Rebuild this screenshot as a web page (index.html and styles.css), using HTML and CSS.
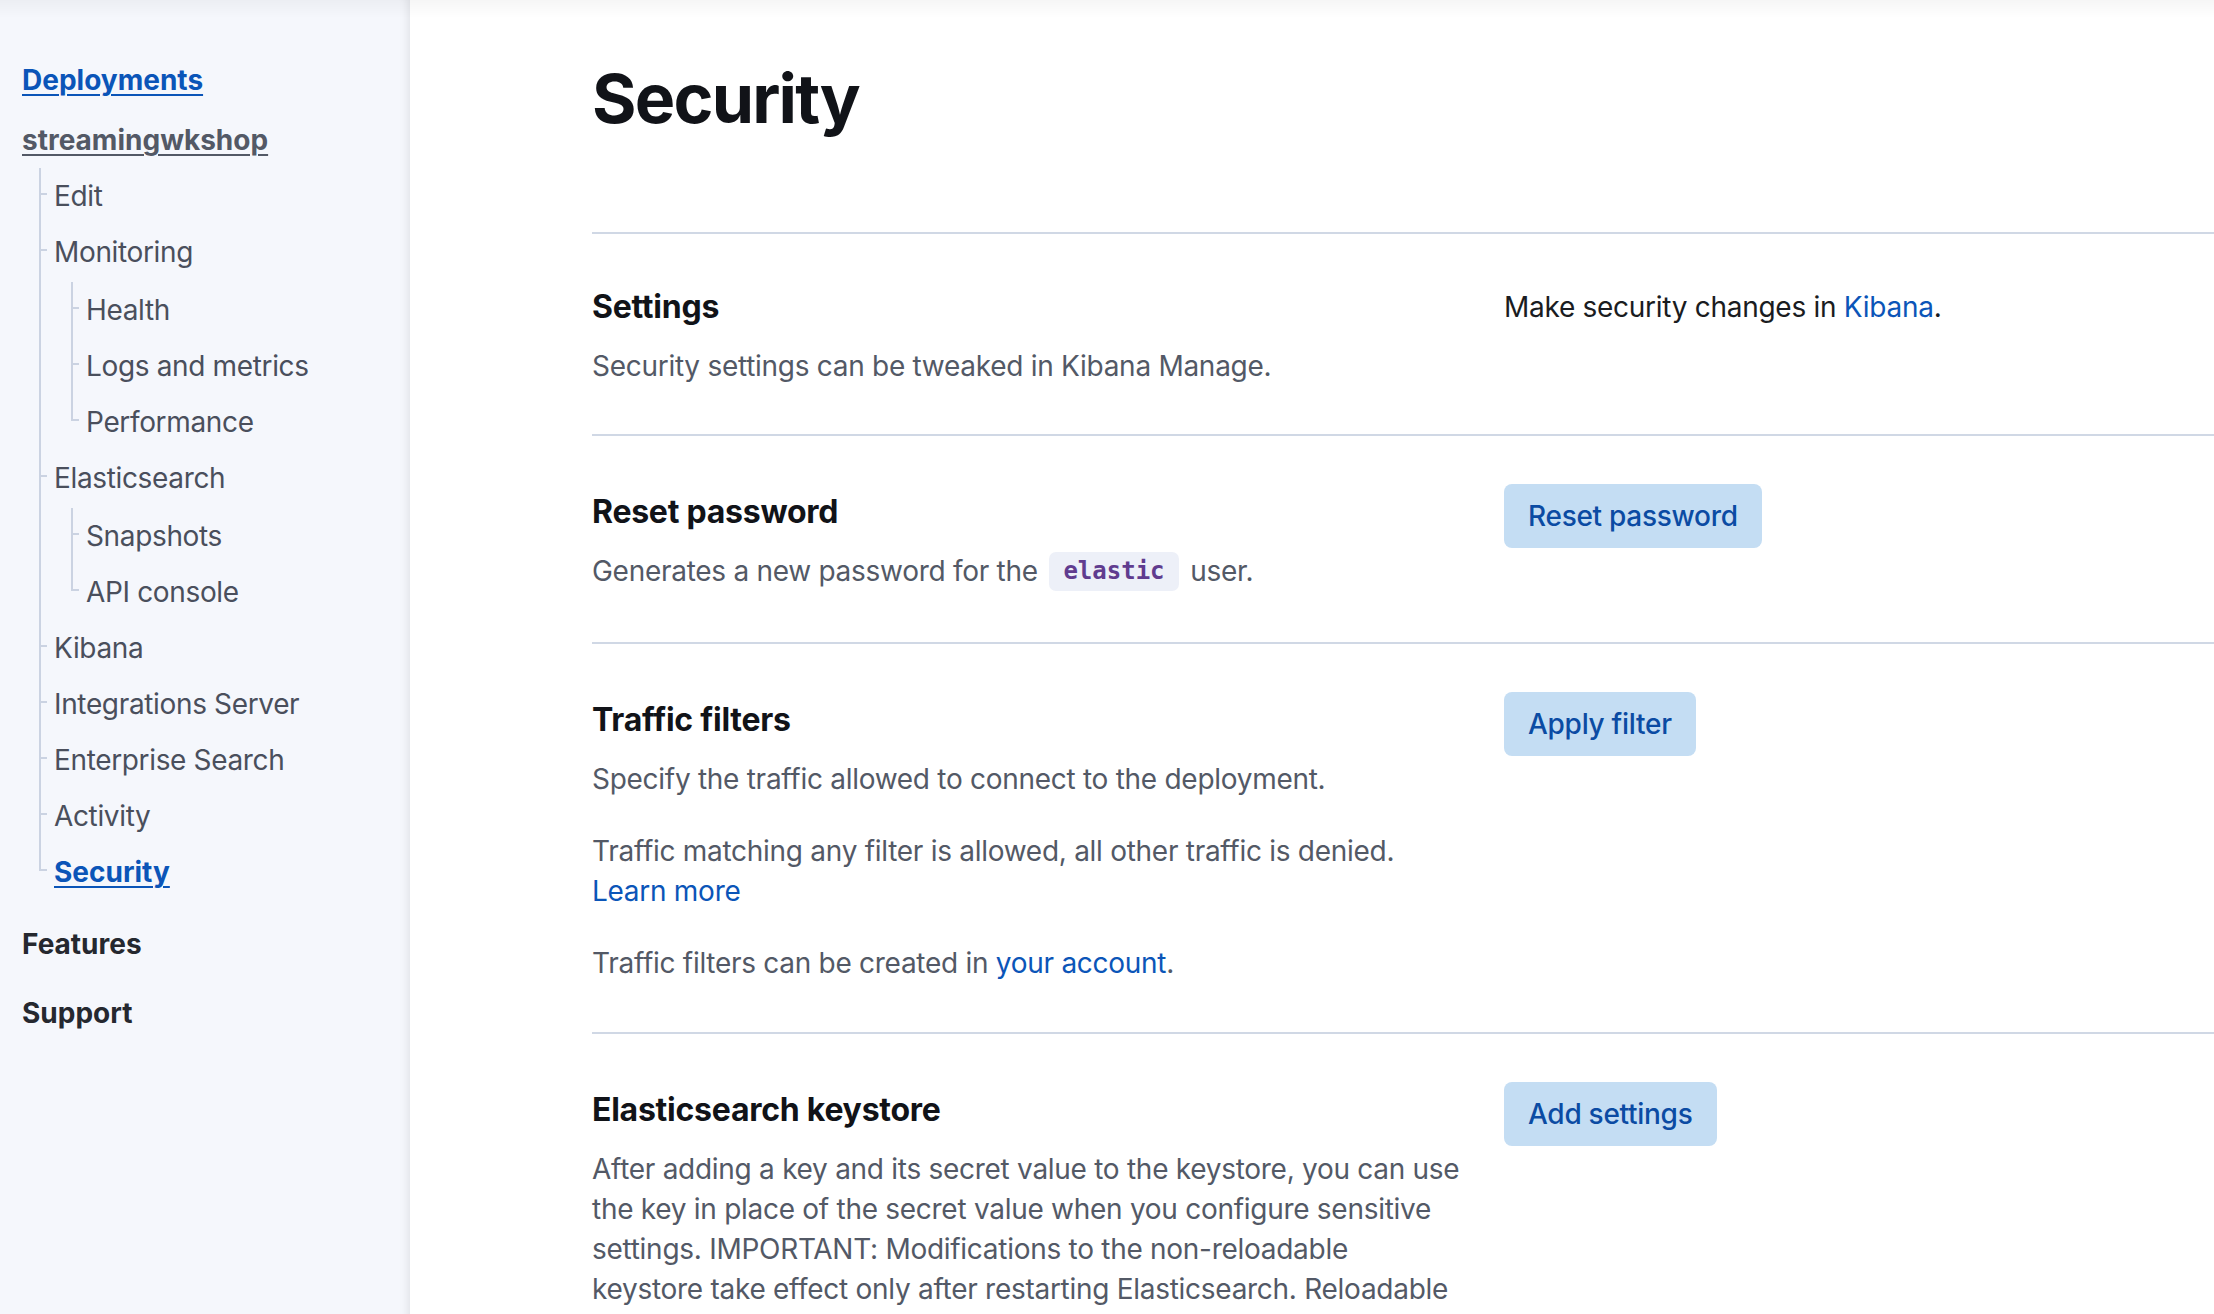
FILE: index.html
```html
<!DOCTYPE html>
<html lang="en">
<head>
<meta charset="utf-8">
<title>Security</title>
<link rel="stylesheet" href="styles.css">
</head>
<body>
<div class="top-shadow"></div>
<aside class="sidebar">
  <a class="nav-root" href="#">Deployments</a>
  <a class="nav-deployment" href="#">streamingwkshop</a>
  <ul class="tree">
    <li><span class="item">Edit</span></li>
    <li><span class="item">Monitoring</span>
      <ul class="tree">
        <li><span class="item">Health</span></li>
        <li><span class="item">Logs and metrics</span></li>
        <li><span class="item">Performance</span></li>
      </ul>
    </li>
    <li><span class="item">Elasticsearch</span>
      <ul class="tree">
        <li><span class="item">Snapshots</span></li>
        <li><span class="item">API console</span></li>
      </ul>
    </li>
    <li><span class="item">Kibana</span></li>
    <li><span class="item">Integrations Server</span></li>
    <li><span class="item">Enterprise Search</span></li>
    <li><span class="item">Activity</span></li>
    <li><a class="item active" href="#">Security</a></li>
  </ul>
  <div class="nav-group features">Features</div>
  <div class="nav-group support">Support</div>
</aside>
<main class="main">
  <h1 class="page-title">Security</h1>

  <section class="row row-first">
    <div class="row-desc">
      <h2 class="row-title">Settings</h2>
      <p class="row-text">Security settings can be tweaked in Kibana Manage.</p>
    </div>
    <div class="row-field">
      <p class="field-text">Make security changes in <a class="link" href="#">Kibana</a>.</p>
    </div>
  </section>

  <section class="row">
    <div class="row-desc">
      <h2 class="row-title">Reset password</h2>
      <p class="row-text">Generates a new password for the <code class="code">elastic</code> user.</p>
    </div>
    <div class="row-field">
      <button class="btn">Reset password</button>
    </div>
  </section>

  <section class="row">
    <div class="row-desc">
      <h2 class="row-title">Traffic filters</h2>
      <p class="row-text">Specify the traffic allowed to connect to the deployment.</p>
      <p class="row-text spaced">Traffic matching any filter is allowed, all other traffic is denied.<br><a class="link" href="#">Learn more</a></p>
      <p class="row-text spaced">Traffic filters can be created in <a class="link" href="#">your account</a>.</p>
    </div>
    <div class="row-field">
      <button class="btn">Apply filter</button>
    </div>
  </section>

  <section class="row">
    <div class="row-desc">
      <h2 class="row-title">Elasticsearch keystore</h2>
      <p class="row-text">After adding a key and its secret value to the keystore, you can use the key in place of the secret value when you configure sensitive settings. IMPORTANT: Modifications to the non-reloadable keystore take effect only after restarting Elasticsearch. Reloadable keystore changes take effect after issuing a reload API request. <a class="link" href="#">Learn more</a></p>
    </div>
    <div class="row-field">
      <button class="btn">Add settings</button>
    </div>
  </section>
</main>
</body>
</html>
```

FILE: styles.css
```css
* { box-sizing: border-box; }

html, body {
  margin: 0;
  padding: 0;
}

body {
  display: flex;
  min-height: 100vh;
  font-family: Inter, "Noto Sans", "Liberation Sans", sans-serif;
  background: #ffffff;
  color: #1a1c21;
  overflow: hidden;
}

.top-shadow {
  position: fixed;
  top: 0;
  left: 0;
  right: 0;
  height: 18px;
  background: linear-gradient(to bottom, rgba(0, 0, 0, 0.035), rgba(0, 0, 0, 0));
  pointer-events: none;
  z-index: 5;
}

/* ---------- Sidebar ---------- */
.sidebar {
  flex: 0 0 410px;
  width: 410px;
  background: #f5f7fc;
  box-shadow: inset -10px 0 10px -8px rgba(0, 0, 0, 0.09);
  padding: 52px 0 0 22px;
  display: flex;
  flex-direction: column;
  align-items: flex-start;
  font-size: 28px;
  line-height: 56px;
  letter-spacing: -0.35px;
}

.nav-root {
  color: #0b55b8;
  font-weight: 700;
  letter-spacing: 0;
  text-decoration: underline;
  text-decoration-thickness: 2px;
  text-underline-offset: 4px;
  margin-bottom: 4px;
}

.nav-deployment {
  color: #535966;
  font-weight: 700;
  letter-spacing: 0;
  text-decoration: underline;
  text-decoration-thickness: 2px;
  text-underline-offset: 4px;
}

.tree {
  list-style: none;
  margin: 0;
  padding: 0 0 0 32px;
}

.tree li {
  position: relative;
}

.tree li::before {
  content: "";
  position: absolute;
  left: -15px;
  top: 25px;
  width: 8px;
  height: 2px;
  background: #cbd3e2;
}

.tree li::after {
  content: "";
  position: absolute;
  left: -15px;
  top: 0;
  bottom: 0;
  width: 2px;
  background: #cbd3e2;
}

.tree li:last-child::after {
  bottom: auto;
  height: 27px;
}

.tree .tree {
  margin-top: 2px;
}

.item {
  display: block;
  color: #4a4f5c;
  text-decoration: none;
  white-space: nowrap;
}

.item.active {
  display: inline-block;
  color: #0b55b8;
  font-weight: 700;
  letter-spacing: 0;
  text-decoration: underline;
  text-decoration-thickness: 2px;
  text-underline-offset: 4px;
}

.nav-group {
  font-weight: 700;
  letter-spacing: 0;
  color: #25282f;
}

.features { margin-top: 16px; }
.support { margin-top: 13px; }

/* ---------- Main ---------- */
.main {
  flex: 1 1 auto;
  min-width: 0;
  padding: 58px 0 0 182px;
}

.page-title {
  margin: 0 0 94px;
  font-size: 68px;
  line-height: 80px;
  font-weight: 700;
  letter-spacing: -1.8px;
  color: #111318;
}

.row {
  display: flex;
  gap: 42px;
  border-top: 2px solid #d0d8e5;
  padding: 48px 0 49px;
}

.row-first {
  padding-top: 45px;
  padding-bottom: 48px;
}

.row-desc {
  flex: 0 0 870px;
  width: 870px;
}

.row-field {
  flex: 1 1 auto;
}

.row-title {
  margin: 0;
  font-size: 32px;
  line-height: 56px;
  font-weight: 700;
  letter-spacing: -0.25px;
  color: #111318;
}

.row-text {
  margin: 11px 0 0;
  font-size: 28px;
  line-height: 40px;
  letter-spacing: -0.28px;
  color: #535966;
}

.row-text.spaced {
  margin-top: 32px;
}

.field-text {
  margin: 0;
  font-size: 28px;
  line-height: 56px;
  letter-spacing: -0.28px;
  color: #1a1c21;
}

.link {
  color: #0b55b8;
  text-decoration: none;
}

.code {
  display: inline-block;
  font-family: "DejaVu Sans Mono", "Liberation Mono", monospace;
  font-weight: 700;
  font-size: 24px;
  line-height: 39px;
  letter-spacing: 0;
  padding: 0 14px;
  margin: 0 4px;
  border-radius: 7px;
  background: #edf0f8;
  color: #603c8f;
  vertical-align: middle;
  position: relative;
  top: -2px;
}

.btn {
  height: 64px;
  padding: 0 24px;
  border: none;
  border-radius: 8px;
  background: #c4ddf3;
  color: #0b4ba3;
  font-family: Inter, "Noto Sans", "Liberation Sans", sans-serif;
  font-size: 28px;
  font-weight: 500;
  letter-spacing: -0.28px;
  cursor: pointer;
}
```
